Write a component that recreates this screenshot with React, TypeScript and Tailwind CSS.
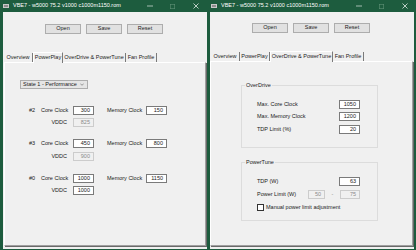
import React from "react";

function TitleBar() {
  return (
    <div className="h-[12px] bg-[#1d5c3e] flex items-center text-white shrink-0">
      <div className="ml-[3px] w-[6px] h-[4px] bg-[#8c8c8c] border-[0.5px] border-[#c8c8c8]" />
      <span className="ml-[4px] text-[5.5px] whitespace-nowrap">VBE7 - w5000 75.2 v1000 c1000m1150.rom</span>
      <div className="ml-auto flex h-full">
        <div className="w-[23px] h-full flex items-center justify-center">
          <svg width="6" height="2" viewBox="0 0 6 2"><line x1="0" y1="1" x2="6" y2="1" stroke="#ffffff" strokeWidth="0.6" /></svg>
        </div>
        <div className="w-[23px] h-full flex items-center justify-center">
          <svg width="5" height="5" viewBox="0 0 5 5"><rect x="0.3" y="0.3" width="4.4" height="4.4" fill="none" stroke="#5f8f76" strokeWidth="0.6" /></svg>
        </div>
        <div className="w-[23px] h-full flex items-center justify-center">
          <svg width="6" height="6" viewBox="0 0 6 6"><path d="M0.5 0.5 L5.5 5.5 M5.5 0.5 L0.5 5.5" stroke="#ffffff" strokeWidth="0.7" /></svg>
        </div>
      </div>
    </div>
  );
}

function Btn({ children }: { children: React.ReactNode }) {
  return (
    <div className="w-[36px] h-[10px] bg-[#e1e1e1] border border-[#adadad] flex items-center justify-center">
      {children}
    </div>
  );
}

function Buttons() {
  return (
    <div className="flex gap-[5px] pl-[42px]">
      <Btn>Open</Btn>
      <Btn>Save</Btn>
      <Btn>Reset</Btn>
    </div>
  );
}

const TAB_DEFS: [string, string][] = [
  ["Overview", "w-[29px]"],
  ["PowerPlay", "w-[30px]"],
  ["OverDrive & PowerTune", "w-[63px]"],
  ["Fan Profile", "w-[31px]"],
];

function Tabs({ active }: { active: number }) {
  return (
    <div className="flex items-end h-[10px] relative z-10">
      {TAB_DEFS.map(([t, w], i) =>
        i === active ? (
          <div
            key={t}
            className={`${w} h-[11px] -mb-[1px] bg-[#f0f0f0] border-l border-t border-white border-r border-r-[#7a7a7a] flex items-center justify-center whitespace-nowrap pb-[1px]`}
          >
            {t}
          </div>
        ) : (
          <div
            key={t}
            className={`${w} h-[9px] border-r border-[#7a7a7a] flex items-center justify-center whitespace-nowrap`}
          >
            {t}
          </div>
        )
      )}
    </div>
  );
}

function Field({ value, disabled, w = "w-[21px]" }: { value: string; disabled?: boolean; w?: string }) {
  return disabled ? (
    <div className={`${w} h-[9px] border border-[#cccccc] bg-[#f0f0f0] text-[#8a8a8a] flex items-center justify-end pr-[3px] shrink-0`}>
      {value}
    </div>
  ) : (
    <div className={`${w} h-[9px] border border-[#7a7a7a] bg-white text-[#1a1a1a] flex items-center justify-end pr-[3px] shrink-0`}>
      {value}
    </div>
  );
}

function ClockRow({ id, core, mem }: { id: string; core: string; mem: string }) {
  return (
    <div className="flex items-center h-[9px]">
      <div className="w-[36px] text-right pr-[6px]">{id}</div>
      <div className="w-[32px]">Core Clock</div>
      <Field value={core} />
      <div className="w-[13px]" />
      <div className="w-[39px]">Memory Clock</div>
      <Field value={mem} />
    </div>
  );
}

function VddcRow({ value, disabled }: { value: string; disabled?: boolean }) {
  return (
    <div className="flex items-center h-[9px]">
      <div className="w-[68px] text-right pr-[6px]">VDDC</div>
      <Field value={value} disabled={disabled} />
    </div>
  );
}

function LeftWindow() {
  return (
    <div className="w-[207px] flex flex-col shrink-0">
      <TitleBar />
      <div className="ml-[3px] h-[237px] bg-[#f0f0f0] flex flex-col">
        <div className="mt-[12px]">
          <Buttons />
        </div>
        <div className="mt-[18px] ml-[1px]">
          <Tabs active={1} />
        </div>
        <div className="ml-[1px] w-[202px] h-[184px] border-l border-t border-white border-r border-b border-r-[#a0a0a0] border-b-[#a0a0a0] shadow-[1px_1px_0_#696969] flex flex-col">
          <div className="mt-[17px] ml-[15px] w-[68px] h-[9px] bg-[#e5e5e5] border border-[#adadad] flex items-center pl-[2px]">
            <span>State 1 - Performance</span>
            <svg className="ml-auto mr-[3px]" width="4" height="3" viewBox="0 0 4 3"><path d="M0.3 0.6 L2 2.3 L3.7 0.6" fill="none" stroke="#444" strokeWidth="0.5" /></svg>
          </div>
          <div className="mt-[17px]">
            <ClockRow id="#2" core="300" mem="150" />
          </div>
          <div className="mt-[3px]">
            <VddcRow value="825" disabled />
          </div>
          <div className="mt-[12px]">
            <ClockRow id="#3" core="450" mem="800" />
          </div>
          <div className="mt-[4px]">
            <VddcRow value="900" disabled />
          </div>
          <div className="mt-[13px]">
            <ClockRow id="#0" core="1000" mem="1150" />
          </div>
          <div className="mt-[3px]">
            <VddcRow value="1000" />
          </div>
        </div>
      </div>
    </div>
  );
}

function Group({ title, children, h }: { title: string; children: React.ReactNode; h: string }) {
  return (
    <div className={`relative w-[137px] ${h} border border-[#dcdcdc] flex flex-col pl-[15px] pr-[17px]`}>
      <span className="absolute left-[3px] -top-[3px] bg-[#f0f0f0] px-[1px] leading-[5px]">{title}</span>
      {children}
    </div>
  );
}

function RightWindow() {
  return (
    <div className="w-[208px] flex flex-col shrink-0">
      <TitleBar />
      <div className="mx-[2px] h-[237px] bg-[#f0f0f0] flex flex-col">
        <div className="mt-[11px]">
          <Buttons />
        </div>
        <div className="mt-[18px] ml-[1px]">
          <Tabs active={2} />
        </div>
        <div className="w-[203px] h-[185px] border-l border-t border-white border-r border-b border-r-[#a0a0a0] border-b-[#a0a0a0] shadow-[1px_1px_0_#696969] flex flex-col pl-[30px]">
          <div className="mt-[23px]">
            <Group title="OverDrive" h="h-[63px]">
              <div className="mt-[14px] flex items-center h-[9px]">
                <span>Max. Core Clock</span>
                <div className="ml-auto"><Field value="1050" /></div>
              </div>
              <div className="mt-[3px] flex items-center h-[9px]">
                <span>Max. Memory Clock</span>
                <div className="ml-auto"><Field value="1200" /></div>
              </div>
              <div className="mt-[4px] flex items-center h-[9px]">
                <span>TDP Limit (%)</span>
                <div className="ml-auto"><Field value="20" /></div>
              </div>
            </Group>
          </div>
          <div className="mt-[14px]">
            <Group title="PowerTune" h="h-[59px]">
              <div className="mt-[14px] flex items-center h-[9px]">
                <span>TDP (W)</span>
                <div className="ml-auto"><Field value="63" /></div>
              </div>
              <div className="mt-[4px] flex items-center h-[9px]">
                <span>Power Limit (W)</span>
                <div className="ml-auto flex items-center">
                  <Field value="50" disabled w="w-[17px]" />
                  <span className="w-[15px] text-center text-[#8a8a8a]">-</span>
                  <Field value="75" disabled w="w-[20px]" />
                </div>
              </div>
              <div className="mt-[5px] flex items-center h-[7px]">
                <div className="w-[7px] h-[7px] border border-[#333333] bg-white" />
                <span className="ml-[2px]">Manual power limit adjustment</span>
              </div>
            </Group>
          </div>
        </div>
      </div>
    </div>
  );
}

export default function App() {
  return (
    <div className="w-[416px] h-[250px] bg-[#1d5c3e] flex overflow-hidden font-['Liberation_Sans',Arial,sans-serif] text-[5.5px] leading-none text-[#1a1a1a]">
      <LeftWindow />
      <div className="w-[1px] shrink-0" />
      <RightWindow />
    </div>
  );
}
